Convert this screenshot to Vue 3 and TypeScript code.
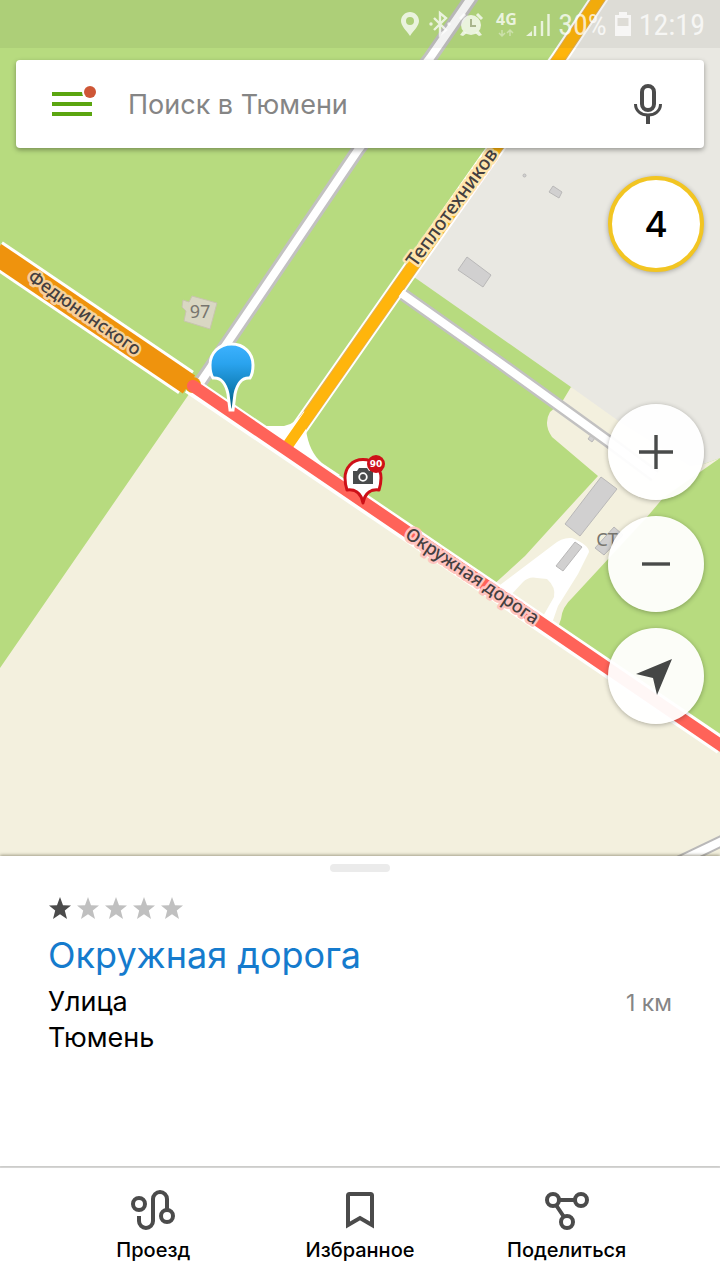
<script setup lang="ts">
import { ref } from 'vue'

const query = ref('')
const rating = 1
const stars = [1, 2, 3, 4, 5]
</script>

<template>
  <main class="screen">
    <section class="map" aria-label="Карта">
      <svg class="map-canvas" viewBox="0 0 720 856" preserveAspectRatio="xMidYMin slice">
        <defs>
          <linearGradient id="pinFill" x1="0" y1="0" x2="0" y2="1">
            <stop offset="0" stop-color="#3db2ff" />
            <stop offset="0.3" stop-color="#2aa3ee" />
            <stop offset="0.7" stop-color="#0f7cb4" />
            <stop offset="1" stop-color="#025b7c" />
          </linearGradient>
        </defs>

        <rect width="720" height="856" fill="#b7db7f" />
        <path d="M600 0H720V458L704 464L662 498L571 387L414 277L440 235Z" fill="#e9e8e2" />
        <path d="M187 397L193 388L720 744V856H0V668Z" fill="#f3f0de" />
        <path
          d="M571 387L562 402L550 412Q543 424 552 437L598 476L565 512L525 556L492 586L557 630L561 619Q562 607 573 597L610 557L647 517L663 498L720 458L704 464L690 466L620 422Z"
          fill="#f3f0de"
        />

        <path d="M496 588L553 545Q562 537 572 538Q589 545 589 552L578 574L558 606L551 626Z" fill="#fff" />
        <path d="M511 595L523 582Q529 576 537 578L547 579Q556 587 554 597L542 618Z" fill="#f3f0de" />

        <g fill="#d1d0d0" stroke="#b9b8b8" stroke-width="1">
          <path d="M601 477L617 489L580 536L565 524Z" />
          <path d="M575 542L582 547L563 571L556 566Z" />
          <path d="M591 435L595 438L592 442L588 439Z" />
          <path d="M595 548L604 555L623 535L614 527Z" />
          <path d="M467 257L491 275L483 287L458 270Z" />
          <path d="M553 186L562 192L559 198L549 192Z" />
          <circle cx="524.5" cy="175.5" r="1.5" />
        </g>
        <path
          d="M192 296L217 303L210 329L184 321L186 311L182 307L183 300L189 302Z"
          fill="#d9d7c3"
          stroke="#c8c5ae"
        />
        <text class="house" x="200" y="318">97</text>
        <text class="house" x="607" y="546">СТ</text>

        <g fill="none">
          <path d="M198 386L270 280L358 150L430 58L474 -6" stroke="#c2c1c1" stroke-width="14" />
          <path d="M198 386L270 280L358 150L430 58L474 -6" stroke="#fff" stroke-width="8" />
          <path d="M401 293L500 363L608 441L655 476" stroke="#c2c1c1" stroke-width="13" />
          <path d="M678 862L724 840" stroke="#b9b8b8" stroke-width="12" />
          <path d="M678 862L724 840" stroke="#fff" stroke-width="8" />
          <path d="M289 443L410 270L558 60L602 -6" stroke="#fff" stroke-width="17" />
          <path d="M289 443L410 270L558 60L602 -6" stroke="#e3b154" stroke-width="13" />
          <path d="M401 293L500 363L608 441L655 476" stroke="#fff" stroke-width="8" />
          <path d="M-5 253L186 382.5" stroke="#fff" stroke-width="28" />
          <path d="M190 385L722 746" stroke="#fff" stroke-width="18" />
        </g>
        <path d="M262 426H284Q296 424 304 411Q307 416 306 430Q309 452 322 463L340 475L320 480Z" fill="#fff" />
        <g fill="none">
          <path d="M288 445L410 270L558 60L602 -6" stroke="#ffb50c" stroke-width="11" />
          <path d="M-5 253L189 384.5" stroke="#ef930d" stroke-width="22" />
          <circle cx="193" cy="385" r="8" fill="#ef930d" />
          <path d="M193 386L722 746" stroke="#ff6359" stroke-width="12" stroke-linecap="round" />
        </g>

        <text class="street street-deep" transform="translate(81 318) rotate(35)">Федюнинского</text>
        <text class="street street-amber" transform="translate(457 211) rotate(-54)">Теплотехников</text>
        <text class="street street-red" transform="translate(469 581) rotate(34)">Окружная дорога</text>

        <path
          d="M231.5 344C219 344 210 353 210 365C210 371 211 375 213 378C221 377 226 384 228 394L230 410H233L235 394C237 384 242 377 250 378C252 375 253 371 253 365C253 353 244 344 231.5 344Z"
          fill="url(#pinFill)"
          stroke="#fff"
          stroke-width="3"
        />

        <path
          d="M363 459.5C352 459.5 345 468 345 478C345 482 346 487 347 490C354 489 361 492 363 503C365 492 372 489 379 490C380 487 381 482 381 478C381 468 374 459.5 363 459.5Z"
          fill="#fff"
          stroke="#ce1018"
          stroke-width="3"
          stroke-linejoin="round"
        />
        <path d="M353 471H357L359 468H367L369 471H373V484H353Z" fill="#494b4c" />
        <circle cx="363" cy="477" r="3.8" fill="#494b4c" stroke="#fff" stroke-width="1.8" />
        <circle cx="376" cy="464" r="9" fill="#ce1018" />
        <text class="limit" x="376" y="467">90</text>
      </svg>

      <header class="status">
        <svg class="status-icons" viewBox="-3 -5 152 36" aria-hidden="true">
          <g fill="currentColor">
            <path
              fill-rule="evenodd"
              d="M9 1C4 1 0 5 0 10C0 15 5 19 9 25C13 19 18 15 18 10C18 5 14 1 9 1ZM9 6A4 4 0 1 1 9 14A4 4 0 1 1 9 6Z"
            />
            <circle cx="30" cy="13" r="1.7" />
            <circle cx="48" cy="13" r="1.7" />
            <circle cx="70" cy="14" r="10" />
            <path d="M62 20L59 24L62 25L66 22ZM78 20L81 24L78 25L74 22Z" />
          </g>
          <g fill="none" stroke="currentColor" stroke-width="3">
            <path d="M33 7L45 19L39 24V2L45 7L33 19" stroke-width="2.4" />
            <path d="M59 8L64 3M76 3L81 8" />
            <path d="M70 8V15H75" stroke="#a9b58d" stroke-width="2" />
            <path d="M101 19V25M98 22L101 25L104 22M109 25V19M106 22L109 19L112 22" stroke-width="1.5" opacity="0.5" />
            <path d="M125 25H131V20Z" fill="currentColor" stroke="none" />
            <path d="M134 25V15M141 25V10M147.500 25V3" stroke-width="2.4" />
          </g>
          <text class="network" x="95" y="14">4G</text>
        </svg>
        <span>30%</span>
        <svg class="battery" viewBox="0 0 16 24" aria-hidden="true">
          <path d="M4 0H12V3H16V24H0V3H4Z" fill="currentColor" />
          <path d="M2.5 6H13.5V14H2.5Z" fill="#dedcd6" />
        </svg>
        <time>12:19</time>
      </header>

      <form class="search" role="search" @submit.prevent>
        <button class="icon-button" type="button" aria-label="Меню">
          <svg width="48" height="40" viewBox="0 0 48 40">
            <path d="M4 10H44M4 20H44M4 30H44" stroke="#5ba510" stroke-width="4" />
            <circle cx="42" cy="8" r="8" fill="#fff" />
            <circle cx="42" cy="8" r="6" fill="#ce5636" />
          </svg>
        </button>
        <input v-model="query" type="text" placeholder="Поиск в Тюмени" aria-label="Поиск в Тюмени" />
        <button class="icon-button" type="button" aria-label="Голосовой поиск">
          <svg width="32" height="44" viewBox="0 0 32 44" fill="none" stroke="#4b4b4b">
            <rect x="10" y="4" width="12" height="24" rx="6" stroke-width="4" />
            <path d="M3.5 22C3.5 29 9 33 16 33S28.5 29 28.5 22" stroke-width="3" />
            <path d="M16 33V42" stroke-width="4" />
          </svg>
        </button>
      </form>

      <button class="round traffic" type="button" aria-label="Пробки: 4">4</button>

      <div class="controls">
        <button class="round" type="button" aria-label="Приблизить">
          <svg width="48" height="48" viewBox="0 0 48 48" stroke="#494b4a" stroke-width="3.4">
            <path d="M7 24H41M24 7V41" />
          </svg>
        </button>
        <button class="round" type="button" aria-label="Отдалить">
          <svg width="48" height="48" viewBox="0 0 48 48" stroke="#494b4a" stroke-width="3.4">
            <path d="M10 24H38" />
          </svg>
        </button>
        <button class="round" type="button" aria-label="Моё местоположение">
          <svg width="48" height="48" viewBox="0 0 48 48">
            <path d="M40 7L4 22L21 26L25 43Z" fill="#454746" />
          </svg>
        </button>
      </div>
    </section>

    <section class="sheet">
      <div class="handle"></div>
      <div class="stars" role="img" aria-label="Оценка 1 из 5">
        <svg v-for="star in stars" :key="star" :class="{ on: star <= rating }" viewBox="0 0 24 24">
          <path d="M12 1L15 9.2L23 9.4L16.8 14.6L19 23L12 18.2L5 23L7.2 14.6L1 9.4L9 9.2Z" />
        </svg>
      </div>
      <h1>Окружная дорога</h1>
      <div class="details">
        <p>Улица<br />Тюмень</p>
        <span class="distance">1 км</span>
      </div>
    </section>

    <nav class="tabs">
      <button type="button">
        <svg viewBox="0 0 48 44" fill="none" stroke="#4b4b4b" stroke-width="4">
          <circle cx="10" cy="16" r="6" />
          <circle cx="38" cy="28" r="6" />
          <path d="M10 28V33A7 7 0 0 0 24 33V11A7 7 0 0 1 38 11V22" />
        </svg>
        Проезд
      </button>
      <button type="button">
        <svg viewBox="0 0 48 44" fill="none" stroke="#4b4b4b" stroke-width="4">
          <path d="M12 37V7.5Q12 6 13.5 6H34.5Q36 6 36 7.5V37L24 30Z" />
        </svg>
        Избранное
      </button>
      <button type="button">
        <svg viewBox="0 0 48 44" fill="none" stroke="#4b4b4b" stroke-width="4">
          <circle cx="10" cy="12" r="6" />
          <circle cx="38" cy="12" r="6" />
          <circle cx="24" cy="34" r="6" />
          <path d="M16 12H32M13 17L21 29" />
        </svg>
        Поделиться
      </button>
    </nav>
  </main>
</template>

<style>
body {
  margin: 0;
}
</style>

<style scoped>
.screen {
  display: flex;
  flex-direction: column;
  min-height: 100vh;
  background: #fff;
  color: #000;
  font-family: Inter, "Liberation Sans", sans-serif;
}

button {
  padding: 0;
  border: 0;
  background: none;
  color: inherit;
  font: inherit;
  cursor: pointer;
}

.map {
  position: relative;
  display: flex;
  flex: 1;
  flex-direction: column;
  overflow: hidden;
}

.map-canvas {
  position: absolute;
  inset: 0;
  width: 100%;
  height: 100%;
}

.status,
.search,
.round,
.controls {
  position: relative;
}

.street {
  font: 500 18px "Noto Sans", sans-serif;
  fill: #443f40;
  stroke-width: 5px;
  stroke-linejoin: round;
  paint-order: stroke;
  text-anchor: middle;
}

.street-deep {
  stroke: #f6d09c;
}

.street-amber {
  font-size: 19px;
  stroke: #ffe5ad;
}

.street-red {
  stroke: #ffc4c0;
}

.house {
  font: 18px "Noto Sans", sans-serif;
  fill: #77756e;
  text-anchor: middle;
}

.limit {
  font: 700 9px "DejaVu Sans", sans-serif;
  fill: #fff;
  text-anchor: middle;
}

.network {
  font: 700 16px "Noto Sans", sans-serif;
  fill: currentColor;
}

.status {
  display: flex;
  align-items: center;
  justify-content: flex-end;
  gap: 8px;
  height: 48px;
  padding: 0 15px;
  box-sizing: border-box;
  background: rgba(0, 0, 0, 0.05);
  color: rgba(255, 255, 255, 0.75);
  font: 30px "Roboto Condensed", "Liberation Sans Narrow", Roboto, sans-serif;
}

.status-icons {
  width: 152px;
  height: 36px;
}

.battery {
  width: 16px;
  height: 24px;
}

.search {
  display: flex;
  align-items: center;
  gap: 32px;
  height: 88px;
  margin: 12px 16px 0;
  padding: 0 32px;
  box-sizing: border-box;
  border-radius: 4px;
  background: #fff;
  box-shadow: 0 2px 5px rgba(0, 0, 0, 0.35);
}

.search input {
  flex: 1;
  min-width: 0;
  padding: 0;
  border: 0;
  outline: 0;
  background: none;
  color: #222;
  font: 27px Inter, sans-serif;
}

.search input::placeholder {
  color: #858585;
  opacity: 1;
}

.icon-button,
.round {
  display: flex;
  align-items: center;
  justify-content: center;
}

.icon-button:last-child {
  width: 48px;
}

.round {
  width: 96px;
  height: 96px;
  box-sizing: border-box;
  border-radius: 50%;
  background: rgba(255, 255, 255, 0.95);
  box-shadow: 0 1px 5px rgba(0, 0, 0, 0.3);
}

.traffic {
  align-self: flex-end;
  margin: 28px 16px 0 0;
  border: 4px solid #f2c522;
  background: #fff;
  font-size: 36px;
  font-weight: 500;
}

.controls {
  display: flex;
  flex-direction: column;
  align-self: flex-end;
  gap: 16px;
  margin: 132px 16px 132px 0;
}

.sheet {
  position: relative;
  padding: 8px 48px 110px;
  box-shadow: 0 -1px 3px rgba(80, 75, 50, 0.5);
}

.handle {
  width: 60px;
  height: 8px;
  margin: 0 auto 24px;
  border-radius: 4px;
  background: #ebebeb;
}

.stars {
  display: flex;
  gap: 4px;
}

.stars svg {
  width: 24px;
  height: 24px;
  fill: #c0c0c0;
}

.stars .on {
  fill: #4b4b4b;
}

h1 {
  margin: 11px 0 5px;
  color: #157bcd;
  font-size: 36px;
  font-weight: 400;
  line-height: 48px;
}

.details {
  display: flex;
  align-items: baseline;
  justify-content: space-between;
  font-size: 27px;
  line-height: 36px;
}

.details p {
  margin: 0;
}

.distance {
  color: #858585;
  font-size: 23px;
}

.tabs {
  display: grid;
  grid-template-columns: repeat(3, 1fr);
  padding: 20px 50px 18px;
  border-top: 2px solid #d9d9d9;
}

.tabs button {
  display: flex;
  flex-direction: column;
  align-items: center;
  gap: 6px;
  font-size: 20px;
  font-weight: 500;
  line-height: 24px;
}

.tabs svg {
  width: 48px;
  height: 44px;
}
</style>
